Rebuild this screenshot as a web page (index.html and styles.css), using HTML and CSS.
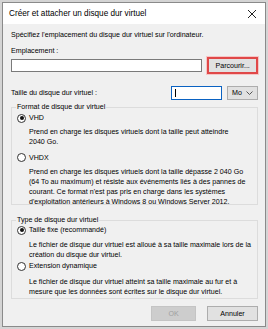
FILE: index.html
```html
<!DOCTYPE html>
<html lang="fr">
<head>
    <meta charset="UTF-8">
    <title>Créer et attacher un disque dur virtuel</title>
    <link rel="stylesheet" href="styles.css">
</head>
<body>
    <div class="dialog">
        <div class="titlebar">
            <span class="title">Créer et attacher un disque dur virtuel</span>
            <svg class="close" width="10" height="10" viewBox="0 0 10 10">
                <path d="M1 1 L9 9 M9 1 L1 9" stroke="#222" stroke-width="1" fill="none"/>
            </svg>
        </div>
        <div class="content">
            <p class="intro">Spécifiez l'emplacement du disque dur virtuel sur l'ordinateur.</p>
            <label class="field-label">Emplacement :</label>
            <div class="row location-row">
                <div class="textbox location"></div>
                <button class="btn browse">Parcourir...</button>
            </div>
            <div class="row size-row">
                <span class="size-label">Taille du disque dur virtuel :</span>
                <div class="textbox size"><span class="caret"></span></div>
                <div class="combo">Mo
                    <svg width="7" height="4" viewBox="0 0 7 4">
                        <path d="M0.5 0.5 L3.5 3.5 L6.5 0.5" stroke="#555" fill="none"/>
                    </svg>
                </div>
            </div>

            <fieldset class="group format">
                <legend>Format de disque dur virtuel</legend>
                <div class="option">
                    <span class="radio checked"></span>VHD
                </div>
                <p class="desc">Prend en charge les disques virtuels dont la taille peut atteindre<br>2040 Go.</p>
                <div class="option">
                    <span class="radio"></span>VHDX
                </div>
                <p class="desc">Prend en charge les disques virtuels dont la taille dépasse 2 040 Go<br>(64 To au maximum) et résiste aux événements liés à des pannes de<br>courant. Ce format n'est pas pris en charge dans les systèmes<br>d'exploitation antérieurs à Windows 8 ou Windows Server 2012.</p>
            </fieldset>

            <fieldset class="group type">
                <legend>Type de disque dur virtuel</legend>
                <div class="option">
                    <span class="radio checked"></span>Taille fixe (recommandé)
                </div>
                <p class="desc first">Le fichier de disque dur virtuel est alloué à sa taille maximale lors de la<br>création du disque dur virtuel.</p>
                <div class="option">
                    <span class="radio"></span>Extension dynamique
                </div>
                <p class="desc">Le fichier de disque dur virtuel atteint sa taille maximale au fur et à<br>mesure que les données sont écrites sur le disque dur virtuel.</p>
            </fieldset>

            <div class="actions">
                <button class="btn ok" disabled>OK</button>
                <button class="btn">Annuler</button>
            </div>
        </div>
    </div>
</body>
</html>
```

FILE: styles.css
```css
body {
    margin: 0;
    padding: 2px;
    background-color: #d4d4d4;
    font-family: "Liberation Sans", Arial, sans-serif;
    font-size: 7.1px;
    color: #000;
}

.dialog {
    width: 264px;
    height: 325px;
    border: 1px solid #8a8a8a;
    background-color: #f0f0f0;
    display: flex;
    flex-direction: column;
    box-sizing: border-box;
}

.titlebar {
    height: 21px;
    background-color: #fff;
    display: flex;
    align-items: center;
    justify-content: space-between;
    padding: 0 7px 0 6px;
    flex-shrink: 0;
}

.title {
    font-size: 8.2px;
}

.close {
    margin-right: 1px;
}

.content {
    padding: 6px 7px 0 8px;
    display: flex;
    flex-direction: column;
}

.intro {
    margin: 0 0 6px 0;
    line-height: 10px;
}

.field-label {
    line-height: 10px;
    display: block;
}

.row {
    display: flex;
    align-items: center;
}

.location-row {
    margin-top: 1px;
    gap: 5px;
}

.textbox {
    background-color: #fff;
    border: 1px solid #7a7a7a;
    box-sizing: border-box;
}

.location {
    width: 193px;
    height: 13px;
}

.btn {
    font-family: inherit;
    font-size: 7.1px;
    color: #000;
    background-color: #e1e1e1;
    border: 1px solid #adadad;
    padding: 0;
    height: 15px;
    width: 51px;
    margin: 0;
}

.browse {
    height: 17px;
    border: 2px solid #e04848;
    outline: 1px solid #f6c6c6;
}

.size-row {
    margin-top: 12px;
    height: 14px;
}

.size-label {
    flex: 1;
}

.size {
    width: 51px;
    height: 14px;
    border-color: #0a62c2;
    padding: 2px 3px;
}

.caret {
    display: block;
    width: 1px;
    height: 8px;
    background-color: #000;
}

.combo {
    width: 31px;
    height: 14px;
    margin-left: 5px;
    box-sizing: border-box;
    border: 1px solid #adadad;
    background-color: #e1e1e1;
    display: flex;
    align-items: center;
    justify-content: space-between;
    padding: 0 4px 0 4px;
}

.group {
    margin: 2px 0 0 0;
    padding: 0 6px 0 5px;
    border: 1px solid #dcdcdc;
    border-radius: 0;
    box-sizing: border-box;
}

.group legend {
    padding: 0 1px;
    margin-left: -1px;
    line-height: 10px;
}

.format {
    height: 103px;
}

.type {
    margin-top: 10px;
    height: 84px;
}

.option {
    display: flex;
    align-items: center;
    line-height: 10px;
    margin-top: 1px;
}

.radio {
    width: 9px;
    height: 9px;
    border: 1px solid #333;
    border-radius: 50%;
    box-sizing: border-box;
    margin-right: 3px;
    background-color: #fff;
    position: relative;
}

.radio.checked::after {
    content: "";
    position: absolute;
    left: 1.5px;
    top: 1.5px;
    width: 4px;
    height: 4px;
    border-radius: 50%;
    background-color: #111;
}

.desc {
    margin: 4px 0 5px 12px;
    line-height: 10.3px;
    white-space: nowrap;
}

.type .option {
    margin-top: 0;
}

.type .desc {
    line-height: 10px;
    margin: 6px 0 1px 12px;
}

.type .desc.first {
    margin-top: 5px;
}

.actions {
    display: flex;
    justify-content: flex-end;
    gap: 11px;
    margin-top: 7px;
    padding-right: 0;
}

.btn.ok {
    width: 45px;
}

.btn:disabled {
    color: #a0a0a0;
    background-color: #cdcdcd;
    border-color: #c4c4c4;
}
```
